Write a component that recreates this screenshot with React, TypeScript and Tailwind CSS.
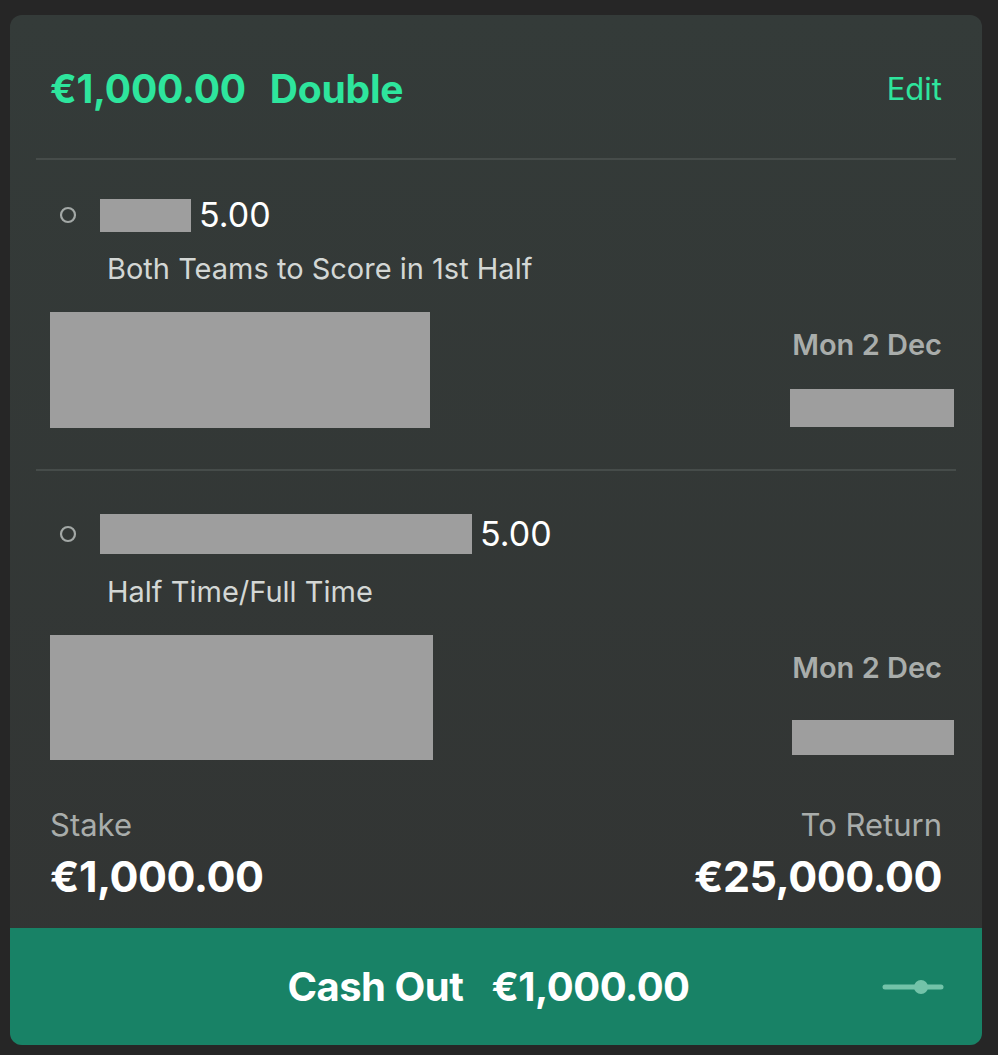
import React from 'react';

type Leg = {
  oddsBarWidth: number;
  oddsBarHeight: number;
  market: string;
  padTop: number;
  marketGap: number;
  eventBox: { w: number; h: number };
  kickoffGap: number;
  kickoffBox: { w: number; h: number };
  padBottom: number;
};

const legs: Leg[] = [
  {
    oddsBarWidth: 91,
    oddsBarHeight: 33,
    market: 'Both Teams to Score in 1st Half',
    padTop: 35,
    marketGap: 17,
    eventBox: { w: 380, h: 116 },
    kickoffGap: 28,
    kickoffBox: { w: 164, h: 38 },
    padBottom: 41,
  },
  {
    oddsBarWidth: 372,
    oddsBarHeight: 40,
    market: 'Half Time/Full Time',
    padTop: 43,
    marketGap: 21,
    eventBox: { w: 383, h: 125 },
    kickoffGap: 36,
    kickoffBox: { w: 162, h: 35 },
    padBottom: 0,
  },
];

function Divider() {
  return <div className="mx-[26px] h-[2px] bg-[#464c4a]" />;
}

// hidden selection names / teams are shown as flat grey blocks
function Masked({ w, h }: { w: number; h: number }) {
  return <div className="bg-[#9e9e9e] shrink-0" style={{ width: w, height: h }} />;
}

function LegRow({ leg }: { leg: Leg }) {
  return (
    <div className="pl-[40px] pr-[28px]" style={{ paddingTop: leg.padTop, paddingBottom: leg.padBottom }}>
      <div className="flex items-center h-[40px]">
        <svg width="20" height="20" viewBox="0 0 20 20" className="shrink-0 ml-[8px]">
          <circle cx="10" cy="10" r="7" fill="none" stroke="#a3a8a6" strokeWidth="2.2" />
        </svg>
        <div className="ml-[22px]">
          <Masked w={leg.oddsBarWidth} h={leg.oddsBarHeight} />
        </div>
        <span className="ml-[8px] text-[34px] leading-none text-white">5.00</span>
      </div>
      <div className="pl-[57px] text-[29px] leading-[34px] text-[#d3d7d5]" style={{ marginTop: leg.marketGap }}>
        {leg.market}
      </div>
      <div className="mt-[26px] flex justify-between">
        <Masked w={leg.eventBox.w} h={leg.eventBox.h} />
        <div className="flex flex-col items-end pt-[17px]">
          <span className="pr-[12px] text-[29px] leading-[32px] font-semibold text-[#a9adab]">Mon 2 Dec</span>
          <div style={{ marginTop: leg.kickoffGap }}>
            <Masked w={leg.kickoffBox.w} h={leg.kickoffBox.h} />
          </div>
        </div>
      </div>
    </div>
  );
}

export default function App() {
  return (
    <div className="min-h-[1055px] bg-[#262626] pt-[15px] pl-[10px] font-['Inter','Roboto',sans-serif]">
      <div className="w-[972px] rounded-[12px] overflow-hidden bg-gradient-to-b from-[#343b39] to-[#323433]">
        {/* bet header */}
        <div className="h-[143px] px-[40px] pt-[6px] flex items-center justify-between">
          <div className="text-[39px] font-bold text-[#2ee59d] tracking-[-0.2px]">
            €1,000.00<span className="ml-[24px]">Double</span>
          </div>
          <span className="text-[31px] text-[#2ee59d]">Edit</span>
        </div>
        <Divider />

        <LegRow leg={legs[0]} />
        <Divider />
        <LegRow leg={legs[1]} />

        {/* stake / returns */}
        <div className="px-[40px] pt-[48px] pb-[26px] flex justify-between">
          <div className="flex flex-col">
            <span className="text-[31px] leading-[34px] text-[#a9adab]">Stake</span>
            <span className="mt-[8px] text-[43px] leading-[52px] font-bold text-white tracking-[-0.5px]">€1,000.00</span>
          </div>
          <div className="flex flex-col items-end">
            <span className="text-[31px] leading-[34px] text-[#a9adab]">To Return</span>
            <span className="mt-[8px] text-[43px] leading-[52px] font-bold text-white tracking-[-0.5px]">€25,000.00</span>
          </div>
        </div>

        {/* cash out */}
        <div className="relative h-[117px] bg-[#188266] flex items-center justify-center">
          <span className="mr-[15px] text-[40px] font-bold text-white tracking-[-0.5px]">
            Cash Out<span className="ml-[28px]">€1,000.00</span>
          </span>
          <svg width="62" height="18" viewBox="0 0 62 18" className="absolute right-[38px] top-[50px]">
            <line x1="3" y1="9" x2="59" y2="9" stroke="#73c3a9" strokeWidth="5" strokeLinecap="round" />
            <circle cx="39" cy="9" r="7" fill="#73c3a9" />
          </svg>
        </div>
      </div>
    </div>
  );
}
